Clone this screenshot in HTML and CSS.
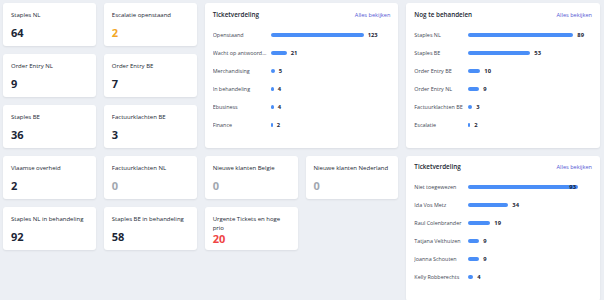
FILE: index.html
```html
<!DOCTYPE html>
<html lang="nl">
<head>
    <meta charset="UTF-8">
    <meta name="viewport" content="width=device-width, initial-scale=1.0">
    <title>Dashboard</title>
    <link rel="stylesheet" href="styles.css">
</head>
<body>
    <div class="dashboard">
        <div class="stat-card">
            <div class="stat-title">Staples NL</div>
            <div class="stat-value">64</div>
        </div>
        <div class="stat-card">
            <div class="stat-title">Escalatie openstaand</div>
            <div class="stat-value warning">2</div>
        </div>

        <div class="chart-card chart-wide-labels">
            <div class="chart-header">
                <span class="chart-title">Ticketverdeling</span>
                <a class="chart-link" href="#">Alles bekijken</a>
            </div>
            <div class="bar-row"><span class="bar-label">Openstaand</span><div class="bar-track"><div class="bar" style="width: 93px"></div><span class="bar-value">123</span></div></div>
            <div class="bar-row"><span class="bar-label">Wacht op antwoord klant</span><div class="bar-track"><div class="bar" style="width: 16px"></div><span class="bar-value">21</span></div></div>
            <div class="bar-row"><span class="bar-label">Merchandising</span><div class="bar-track"><div class="bar" style="width: 4px"></div><span class="bar-value">5</span></div></div>
            <div class="bar-row"><span class="bar-label">In behandeling</span><div class="bar-track"><div class="bar" style="width: 3px"></div><span class="bar-value">4</span></div></div>
            <div class="bar-row"><span class="bar-label">Ebusiness</span><div class="bar-track"><div class="bar" style="width: 3px"></div><span class="bar-value">4</span></div></div>
            <div class="bar-row"><span class="bar-label">Finance</span><div class="bar-track"><div class="bar" style="width: 2px"></div><span class="bar-value">2</span></div></div>
        </div>

        <div class="chart-card">
            <div class="chart-header">
                <span class="chart-title">Nog te behandelen</span>
                <a class="chart-link" href="#">Alles bekijken</a>
            </div>
            <div class="bar-row"><span class="bar-label">Staples NL</span><div class="bar-track"><div class="bar" style="width: 105px"></div><span class="bar-value">89</span></div></div>
            <div class="bar-row"><span class="bar-label">Staples BE</span><div class="bar-track"><div class="bar" style="width: 62px"></div><span class="bar-value">53</span></div></div>
            <div class="bar-row"><span class="bar-label">Order Entry BE</span><div class="bar-track"><div class="bar" style="width: 12px"></div><span class="bar-value">10</span></div></div>
            <div class="bar-row"><span class="bar-label">Order Entry NL</span><div class="bar-track"><div class="bar" style="width: 11px"></div><span class="bar-value">9</span></div></div>
            <div class="bar-row"><span class="bar-label">Factuurklachten BE</span><div class="bar-track"><div class="bar" style="width: 4px"></div><span class="bar-value">3</span></div></div>
            <div class="bar-row"><span class="bar-label">Escalatie</span><div class="bar-track"><div class="bar" style="width: 2px"></div><span class="bar-value">2</span></div></div>
        </div>

        <div class="stat-card">
            <div class="stat-title">Order Entry NL</div>
            <div class="stat-value">9</div>
        </div>
        <div class="stat-card">
            <div class="stat-title">Order Entry BE</div>
            <div class="stat-value">7</div>
        </div>
        <div class="stat-card">
            <div class="stat-title">Staples BE</div>
            <div class="stat-value">36</div>
        </div>
        <div class="stat-card">
            <div class="stat-title">Factuurklachten BE</div>
            <div class="stat-value">3</div>
        </div>
        <div class="stat-card">
            <div class="stat-title">Vlaamse overheid</div>
            <div class="stat-value">2</div>
        </div>
        <div class="stat-card">
            <div class="stat-title">Factuurklachten NL</div>
            <div class="stat-value empty">0</div>
        </div>
        <div class="stat-card">
            <div class="stat-title">Nieuwe klanten Belgie</div>
            <div class="stat-value empty">0</div>
        </div>
        <div class="stat-card">
            <div class="stat-title">Nieuwe klanten Nederland</div>
            <div class="stat-value empty">0</div>
        </div>

        <div class="chart-card chart-low">
            <div class="chart-header">
                <span class="chart-title">Ticketverdeling</span>
                <a class="chart-link" href="#">Alles bekijken</a>
            </div>
            <div class="bar-row bar-row-max"><span class="bar-label">Niet toegewezen</span><div class="bar-track"><div class="bar" style="width: 110px"></div><span class="bar-value">93</span></div></div>
            <div class="bar-row"><span class="bar-label">Ida Vos Metz</span><div class="bar-track"><div class="bar" style="width: 40px"></div><span class="bar-value">34</span></div></div>
            <div class="bar-row"><span class="bar-label">Raul Colenbrander</span><div class="bar-track"><div class="bar" style="width: 22px"></div><span class="bar-value">19</span></div></div>
            <div class="bar-row"><span class="bar-label">Tatjana Velthuizen</span><div class="bar-track"><div class="bar" style="width: 11px"></div><span class="bar-value">9</span></div></div>
            <div class="bar-row"><span class="bar-label">Joanna Schouten</span><div class="bar-track"><div class="bar" style="width: 11px"></div><span class="bar-value">9</span></div></div>
            <div class="bar-row"><span class="bar-label">Kelly Robberechts</span><div class="bar-track"><div class="bar" style="width: 5px"></div><span class="bar-value">4</span></div></div>
        </div>

        <div class="stat-card">
            <div class="stat-title">Staples NL in behandeling</div>
            <div class="stat-value">92</div>
        </div>
        <div class="stat-card">
            <div class="stat-title">Staples BE in behandeling</div>
            <div class="stat-value">58</div>
        </div>
        <div class="stat-card">
            <div class="stat-title">Urgente Tickets en hoge prio</div>
            <div class="stat-value danger">20</div>
        </div>
    </div>
</body>
</html>
```

FILE: styles.css
```css
html, body {
    height: 100%;
    overflow: hidden;
}

body {
    font-family: 'Open Sans', 'Noto Sans', sans-serif;
    background: #eceff4;
    margin: 0;
    padding: 3px 4px 0 3px;
    color: #374151;
    box-sizing: border-box;
}

.dashboard {
    display: grid;
    grid-template-columns: repeat(6, 1fr);
    grid-auto-rows: 43px;
    gap: 8px;
}

.stat-card,
.chart-card {
    background: #fff;
    border-radius: 3px;
    box-shadow: 0 1px 2px rgba(15, 23, 42, 0.08);
    padding: 8px 8px 6px;
    min-width: 0;
}

/* small counter tiles */
.stat-card {
    display: flex;
    flex-direction: column;
    justify-content: space-between;
}

.stat-title {
    font-size: 6px;
    line-height: 8.5px;
    font-weight: 500;
    color: #222833;
}

.stat-value {
    font-size: 11px;
    line-height: 14px;
    font-weight: 700;
    color: #1b2536;
}

.stat-value.warning {
    color: #f3a626;
}

.stat-value.empty {
    color: #a1a7b0;
}

.stat-value.danger {
    color: #ef4444;
}

/* bar chart cards */
.chart-card {
    grid-column: span 2;
    grid-row: span 3;
    padding-top: 7px;
}

.chart-low {
    padding-top: 6px;
}

.chart-header {
    display: flex;
    justify-content: space-between;
    align-items: center;
    height: 9px;
    margin-bottom: 7px;
}

.chart-title {
    font-size: 6.3px;
    font-weight: 600;
    color: #222833;
}

.chart-link {
    font-size: 5.6px;
    color: #5457d4;
    text-decoration: none;
}

.bar-row {
    display: grid;
    grid-template-columns: 54px 1fr;
    align-items: center;
    height: 18px;
}

.chart-wide-labels .bar-row {
    grid-template-columns: 58px 1fr;
}

.bar-label {
    font-size: 5.4px;
    color: #3f4754;
    white-space: nowrap;
    overflow: hidden;
    text-overflow: ellipsis;
    padding-right: 3px;
}

.bar-track {
    display: flex;
    align-items: center;
}

.bar {
    height: 4px;
    min-width: 2px;
    border-radius: 2px;
    background: #4a8ef7;
    flex-shrink: 0;
}

.bar-value {
    font-size: 5.8px;
    font-weight: 700;
    color: #1b2536;
    margin-left: 4px;
}

.bar-row-max .bar-value {
    margin-left: -9px;
}
```
